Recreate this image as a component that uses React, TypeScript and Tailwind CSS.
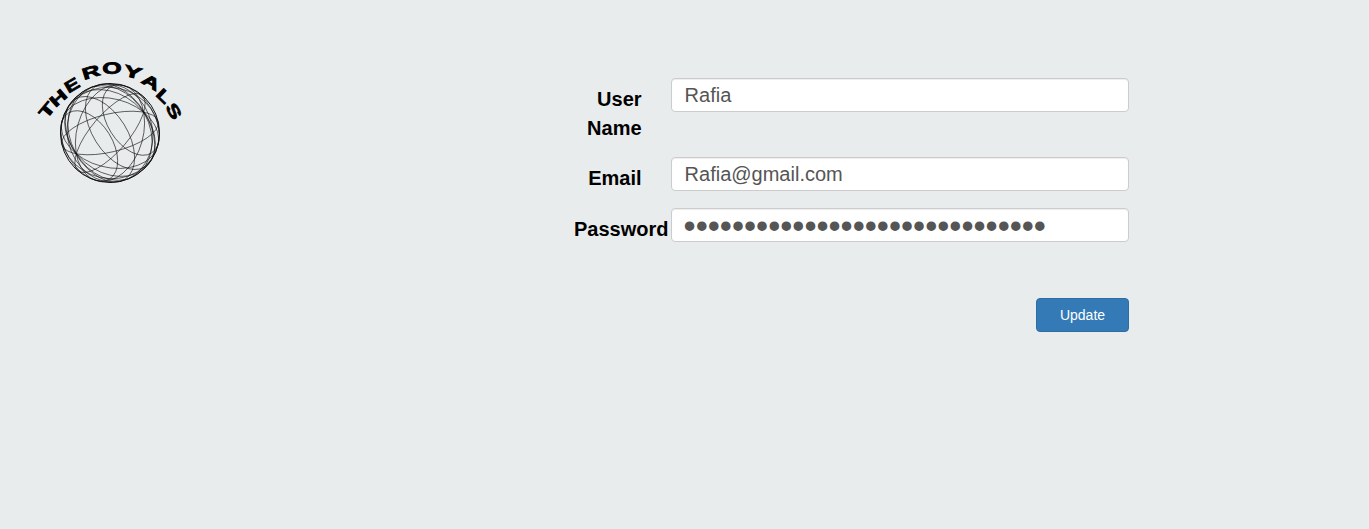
const letters: [string, number, number, number, number][] = [
  ["T", 47, 110, -50, 1.6],
  ["H", 58, 98, -42, 1.5],
  ["E", 72, 85, -30, 1.35],
  ["R", 91, 72, -17, 1.55],
  ["O", 112, 68, -2, 1.55],
  ["Y", 133, 72, 14, 1.7],
  ["A", 151, 82, 30, 1.6],
  ["L", 164, 96, 44, 1.4],
  ["S", 174, 111, 60, 1.5],
];

const R = 49.5;

function greatCircle(n: [number, number, number]) {
  const len = Math.hypot(n[0], n[1], n[2]);
  const [a, b, c] = [n[0] / len, n[1] / len, n[2] / len];
  const ry = Math.abs(c) * R;
  const angle = (Math.atan2(b, a) * 180) / Math.PI + 90;
  return { ry, angle };
}

const pole: [number, number, number] = [0.68, -0.42, 0.6];
function meridian(phi: number): [number, number, number] {
  const u: [number, number, number] = [0.42, 0.68, 0];
  const v: [number, number, number] = [
    pole[1] * u[2] - pole[2] * u[1],
    pole[2] * u[0] - pole[0] * u[2],
    pole[0] * u[1] - pole[1] * u[0],
  ];
  const c = Math.cos(phi);
  const s = Math.sin(phi);
  return [u[0] * c + v[0] * s, u[1] * c + v[1] * s, u[2] * c + v[2] * s];
}

const circles = [0, 0.5, 1.05, 1.6, 2.15, 2.65].map((p) => greatCircle(meridian(p)));
const parallels = [-0.62, -0.3, 0.3, 0.62].map((s) => ({
  cx: 0.68 * R * s,
  cy: -0.42 * R * s,
  rx: R * Math.sqrt(1 - s * s),
  ry: R * Math.sqrt(1 - s * s) * 0.6,
}));
const extra: [number, number][] = [
  [12, 0.92],
  [78, 0.86],
  [40, 0.78],
];

const labelClass =
  "w-[97.6px] shrink-0 pl-[16px] pr-[14px] pt-[7px] text-right font-bold text-[20px] leading-[28.57px] text-black";
const inputClass =
  "block w-full h-[34px] pl-[13px] pr-[12px] bg-white border border-[#ccc] rounded-[4px] text-[20px] text-[#555] shadow-[inset_0_1px_1px_rgba(0,0,0,0.075)] outline-none";

export default function App() {
  return (
    <div className="min-h-[529px] bg-[#e9eced] flex font-['Liberation_Sans',Arial,sans-serif]">
      <div className="w-[558px] shrink-0 pl-[24px] pt-[50px]">
        <svg width="172" height="140" viewBox="24 50 172 140" role="img" aria-label="The Royals">
          {letters.map(([ch, x, y, rot, sx]) => (
            <text
              key={ch + x}
              transform={`translate(${x} ${y}) rotate(${rot}) scale(${sx} 1)`}
              y="5.7"
              textAnchor="middle"
              fontFamily="'Liberation Sans', Arial, sans-serif"
              fontWeight="700"
              fontSize="16"
              stroke="#000"
              strokeWidth="0.8"
              fill="#000"
            >
              {ch}
            </text>
          ))}
          <g fill="none" stroke="#111" strokeWidth="0.6" transform="translate(110 133)">
            <circle r={R} strokeWidth="1" />
            {circles.map((c, i) => (
              <ellipse key={i} rx={R} ry={c.ry} transform={`rotate(${c.angle})`} />
            ))}
            {parallels.map((p, i) => (
              <ellipse
                key={i}
                cx={p.cx}
                cy={p.cy}
                rx={p.rx}
                ry={p.ry}
                transform={`rotate(58 ${p.cx} ${p.cy})`}
              />
            ))}
            {extra.map(([a, k], i) => (
              <ellipse key={i} rx={R} ry={R * k} transform={`rotate(${a})`} />
            ))}
          </g>
        </svg>
      </div>
      <div className="w-[586px] shrink-0 pt-[78px]">
        <div className="flex mb-[15px]">
          <label className={labelClass}>User Name</label>
          <div className="flex-1 px-[15px]">
            <input readOnly defaultValue="Rafia" className={inputClass} />
          </div>
        </div>
        <div className="flex mb-[15px]">
          <label className={labelClass}>Email</label>
          <div className="flex-1 px-[15px]">
            <input readOnly defaultValue="Rafia@gmail.com" className={inputClass} />
          </div>
        </div>
        <div className="flex mb-[55px]">
          <label className={labelClass}>Password</label>
          <div className="flex-1 px-[15px]">
            <input
              readOnly
              type="password"
              defaultValue="rafiarafiarafiarafiarafiarafia"
              className="block w-full h-[34px] pl-[12px] pr-[12px] pt-[4px] pb-0 bg-white border border-[#ccc] rounded-[4px] text-[34.5px] leading-[28px] text-[#555] shadow-[inset_0_1px_1px_rgba(0,0,0,0.075)] outline-none"
            />
          </div>
        </div>
        <div className="flex justify-end px-[15px]">
          <button className="w-[93px] h-[34px] bg-[#337ab7] border border-[#2e6da4] rounded-[4px] text-[14px] text-white">
            Update
          </button>
        </div>
      </div>
    </div>
  );
}
